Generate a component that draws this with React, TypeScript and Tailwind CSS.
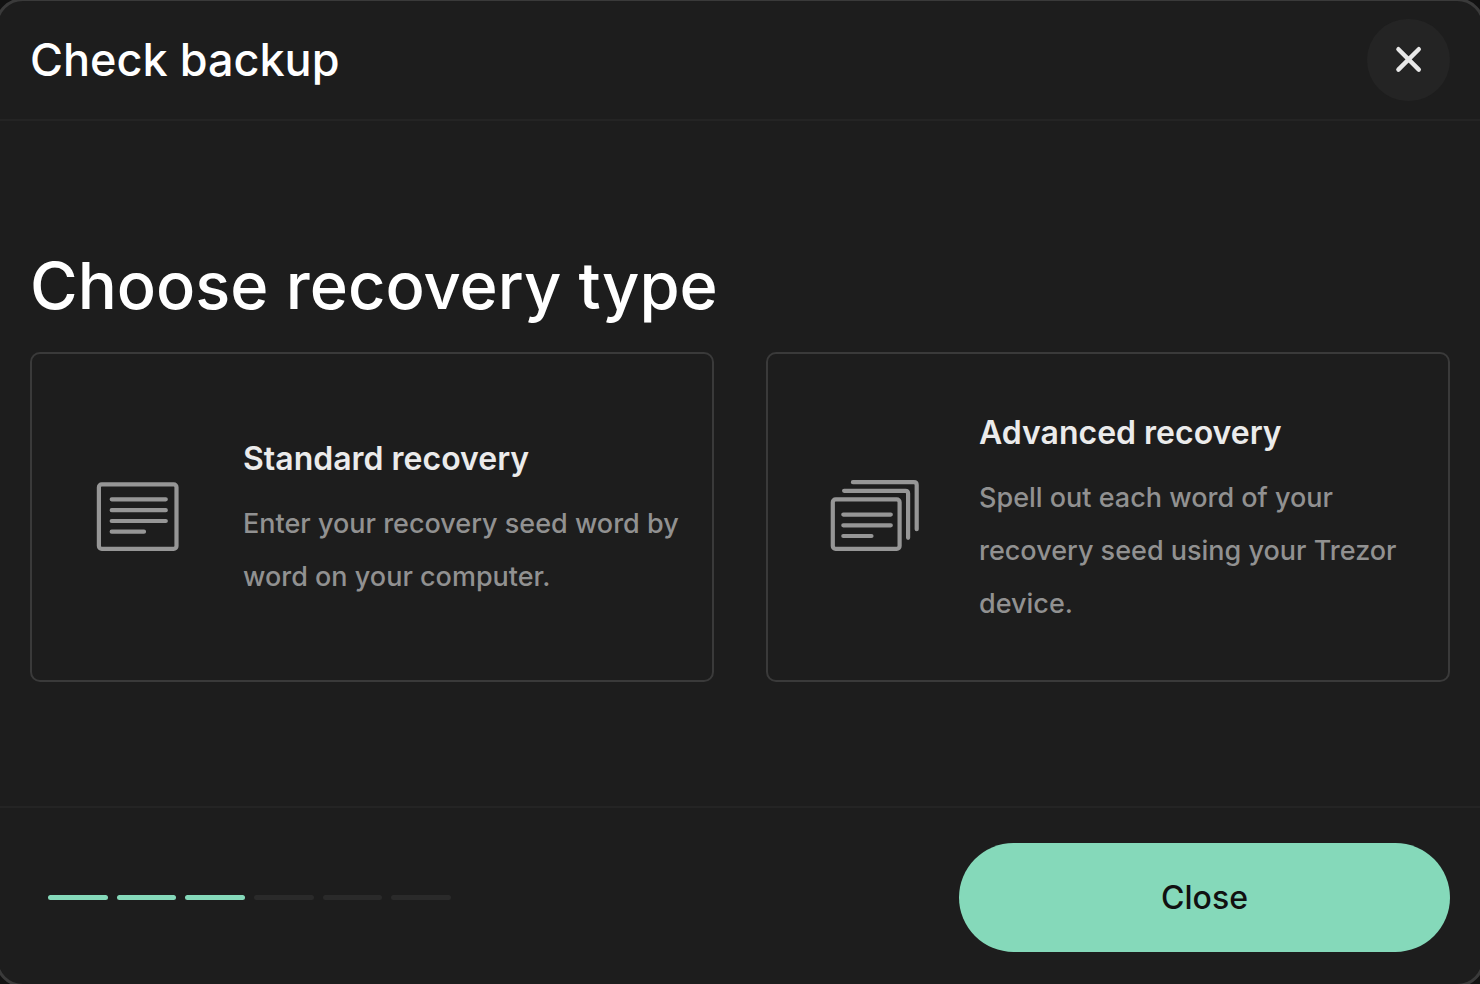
import type { ReactNode } from 'react'

const TOTAL_STEPS = 6
const CURRENT_STEP = 3

function PageIcon() {
  return (
    <svg viewBox="0 0 92 80" className="h-20 w-[92px] shrink-0" fill="none" stroke="#969696" strokeWidth="4.2" strokeLinecap="round" strokeLinejoin="round" aria-hidden="true">
      <rect x="6.9" y="7.4" width="77.6" height="64.4" rx="2.8" />
      <path d="M19.7 22.3H73.8M19.7 33.2H73.8M19.7 44H73.8M19.7 54.7H52" />
    </svg>
  )
}

function PagesIcon() {
  return (
    <svg viewBox="0 0 92 80" className="h-20 w-[92px] shrink-0" fill="none" stroke="#969696" strokeWidth="4.2" strokeLinecap="round" strokeLinejoin="round" aria-hidden="true">
      <path d="M24.9 5.2H86Q88.7 5.2 88.7 7.9V52.2" />
      <path d="M16.1 13.8H77.4Q80.1 13.8 80.1 16.5V60.8" />
      <rect x="4.8" y="22.4" width="66.8" height="49.5" rx="2.8" />
      <path d="M15.3 37.6H62.8M15.3 48.3H62.8M15.3 59H43.5" />
    </svg>
  )
}

function RecoveryOption({ icon, title, children }: { icon: ReactNode; title: string; children: ReactNode }) {
  return (
    <button type="button" className="flex min-h-[330px] items-center gap-[59px] rounded-[10px] border-2 border-[#3a3a3a] pr-5 pl-[60px] text-left">
      {icon}
      <span className="flex flex-col gap-[14px] pt-1">
        <span className="text-[32px] leading-[48px] font-semibold text-[#ebebeb]">{title}</span>
        <span className="text-[27px] leading-[53px] font-medium text-[#919191]">{children}</span>
      </span>
    </button>
  )
}

export default function App() {
  return (
    <div className="flex min-h-screen overflow-hidden bg-[#121212] font-['Inter','Liberation_Sans',sans-serif]">
      <section role="dialog" aria-labelledby="dialog-title" className="-mx-[5px] -mt-0.5 -mb-[3px] flex flex-1 flex-col rounded-[28px] border-[3px] border-[#3a3a3a] bg-[#1d1d1d]">
        <header className="flex h-[120px] items-center justify-between border-b-2 border-[#242424] px-8">
          <h1 id="dialog-title" className="text-[45px] leading-[60px] font-medium text-white">Check backup</h1>
          <button type="button" aria-label="Close dialog" className="flex h-[82px] w-[83px] items-center justify-center rounded-full bg-[#242424]">
            <svg viewBox="0 0 30 30" className="size-[30px]" stroke="#e8e8e8" strokeWidth="4.4" strokeLinecap="round" aria-hidden="true">
              <path d="M4.4 4.2L24.8 24.6M24.8 4.2L4.4 24.6" />
            </svg>
          </button>
        </header>

        <main className="flex flex-1 flex-col justify-center px-8">
          <h2 className="mb-[25px] text-[65px] leading-[82px] font-medium text-white">Choose recovery type</h2>
          <div className="grid grid-cols-2 gap-[52px]">
            <RecoveryOption icon={<PageIcon />} title="Standard recovery">
              Enter your recovery seed word by word on your computer.
            </RecoveryOption>
            <RecoveryOption icon={<PagesIcon />} title="Advanced recovery">
              Spell out each word of your recovery seed using your Trezor device.
            </RecoveryOption>
          </div>
        </main>

        <footer className="flex items-center justify-between border-t-2 border-[#242424] pt-[35px] pr-8 pb-8 pl-[50px]">
          <div role="progressbar" aria-label="Progress" aria-valuemin={0} aria-valuemax={TOTAL_STEPS} aria-valuenow={CURRENT_STEP} className="flex w-[403px] gap-[9px]">
            {Array.from({ length: TOTAL_STEPS }, (_, i) => (
              <span key={i} className={i < CURRENT_STEP ? 'h-[5px] flex-1 rounded-full bg-[#85d9ba]' : 'h-[5px] flex-1 rounded-full bg-[#2a2a2a]'} />
            ))}
          </div>
          <button type="button" className="h-[109px] w-[491px] rounded-full bg-[#85d9ba] text-[32px] font-medium text-[#111111]">Close</button>
        </footer>
      </section>
    </div>
  )
}
